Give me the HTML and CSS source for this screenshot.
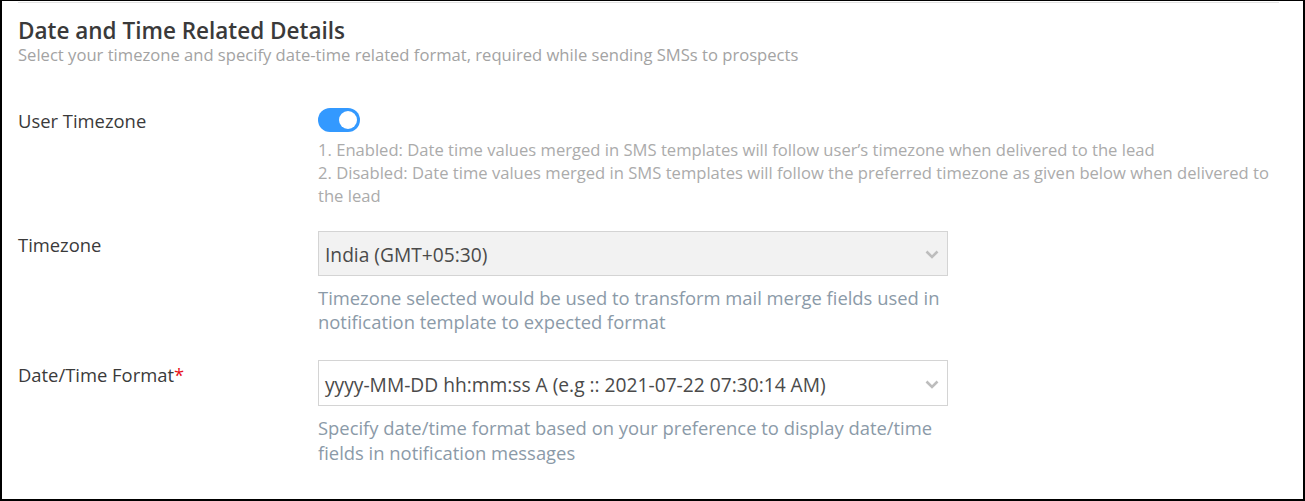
FILE: index.html
```html
<!DOCTYPE html>
<html>
<head>
<meta charset="utf-8">
<link rel="stylesheet" href="styles.css">
</head>
<body>
<div class="frame">
  <div class="section">
    <div class="topline"></div>
    <h2 class="title">Date and Time Related Details</h2>
    <p class="subtitle">Select your timezone and specify date-time related format, required while sending SMSs to prospects</p>

    <div class="row row-toggle">
      <div class="label">User Timezone</div>
      <div class="control wide">
        <div class="toggle on"><span class="knob"></span></div>
        <div class="toggle-help">
          <div>1. Enabled: Date time values merged in SMS templates will follow user’s timezone when delivered to the lead</div>
          <div>2. Disabled: Date time values merged in SMS templates will follow the preferred timezone as given below when delivered to the lead</div>
        </div>
      </div>
    </div>

    <div class="row row-select">
      <div class="label">Timezone</div>
      <div class="control">
        <div class="select disabled">
          <span class="select-text">India (GMT+05:30)</span>
          <svg class="chev" width="14" height="9" viewBox="0 0 14 9"><path d="M1.5 1.5 L7 7 L12.5 1.5" fill="none" stroke="#bdbdbd" stroke-width="2.6"/></svg>
        </div>
        <p class="help">Timezone selected would be used to transform mail merge fields used in notification template to expected format</p>
      </div>
    </div>

    <div class="row row-select row-last">
      <div class="label">Date/Time Format<span class="req">*</span></div>
      <div class="control">
        <div class="select">
          <span class="select-text">yyyy-MM-DD hh:mm:ss A (e.g :: 2021-07-22 07:30:14 AM)</span>
          <svg class="chev" width="14" height="9" viewBox="0 0 14 9"><path d="M1.5 1.5 L7 7 L12.5 1.5" fill="none" stroke="#bdbdbd" stroke-width="2.6"/></svg>
        </div>
        <p class="help">Specify date/time format based on your preference to display date/time fields in notification messages</p>
      </div>
    </div>
  </div>
</div>
</body>
</html>
```

FILE: styles.css
```css
html, body {
  margin: 0;
  padding: 0;
  background: #ffffff;
}

body {
  font-family: "Open Sans", "Noto Sans", "Liberation Sans", sans-serif;
  color: #333333;
}

.frame {
  box-sizing: border-box;
  width: 1305px;
  height: 501px;
  border: 2px solid #000000;
  border-top-width: 1px;
  overflow: hidden;
}

.section {
  padding: 1px 24px 0 16px;
}

.topline {
  height: 1px;
  background: #e3e3e3;
}

.title {
  margin: 14px 0 0 0;
  font-size: 22.5px;
  line-height: 28px;
  font-weight: 600;
  color: #3a3a3a;
}

.subtitle {
  margin: 0;
  font-size: 16.6px;
  line-height: 20px;
  color: #a3a3a3;
}

.row {
  display: grid;
  grid-template-columns: 300px 630px;
}

.row-toggle {
  margin-top: 43px;
  grid-template-columns: 300px 961px;
}

.row-select {
  margin-top: 24px;
}

.row-last {
  margin-top: 26px;
}

.label {
  font-size: 18.4px;
  line-height: 24px;
  color: #3a3a3a;
  padding-top: 1px;
}

.row-select .label {
  padding-top: 2px;
}

.row-last .label {
  padding-top: 3px;
}

.req {
  color: #e8131a;
}

.toggle {
  box-sizing: border-box;
  width: 42px;
  height: 24px;
  border-radius: 12px;
  background: #3399ff;
  display: flex;
  align-items: center;
  justify-content: flex-end;
  padding-right: 3px;
}

.knob {
  width: 18px;
  height: 18px;
  border-radius: 50%;
  background: #ffffff;
}

.toggle-help {
  margin-top: 6px;
  font-size: 16.6px;
  line-height: 23px;
  color: #ababab;
}

.select {
  box-sizing: border-box;
  height: 45px;
  border: 1px solid #d4d4d4;
  background: #ffffff;
  display: flex;
  align-items: center;
  justify-content: space-between;
  padding: 2px 8px 0 6px;
}

.row-last .select {
  height: 46px;
}

.select.disabled {
  background: #f2f2f2;
}

.select-text {
  font-size: 19.2px;
  color: #4a4a4a;
}

.chev {
  display: block;
}

.help {
  margin: 10px 0 0 0;
  font-size: 18.4px;
  line-height: 24px;
  color: #8b9aa8;
}

.row-last .help {
  line-height: 24.5px;
}
```
